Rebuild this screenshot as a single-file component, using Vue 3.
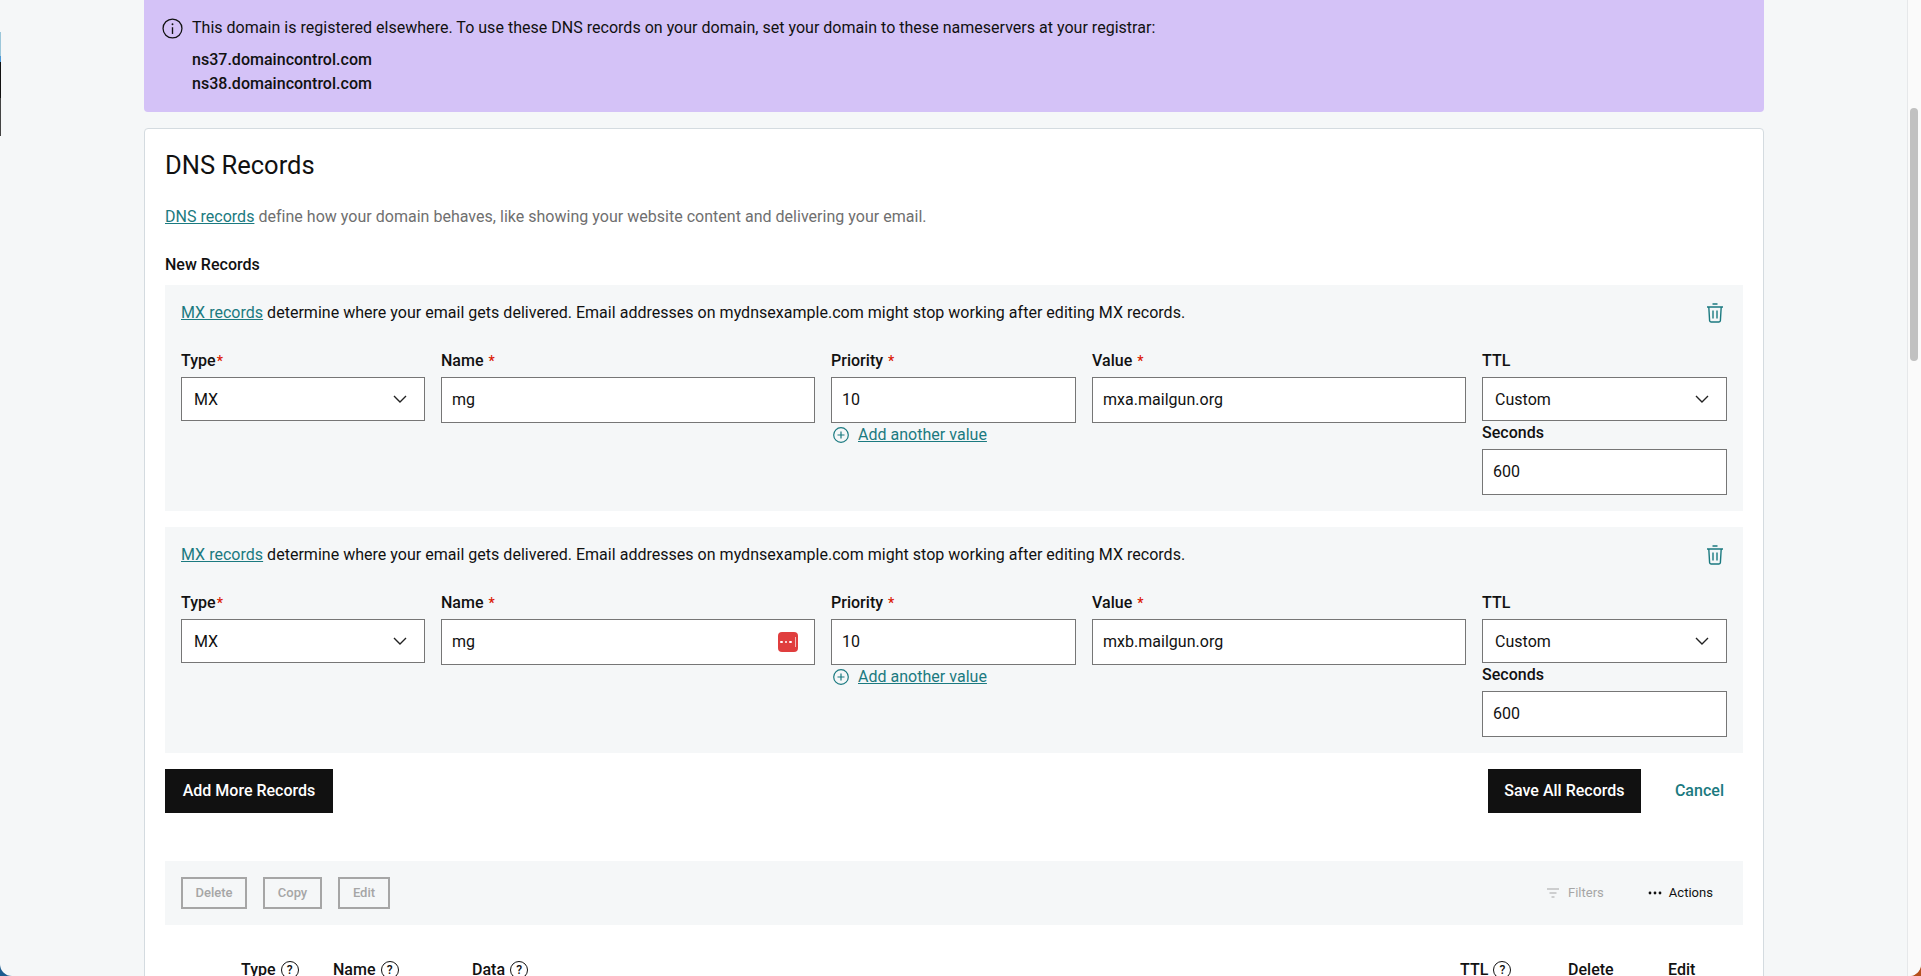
<template>
  <div class="desktop">
    <div class="window">
      <div class="main">
        <div class="notice">
          <svg class="info-icon" viewBox="0 0 20 20" width="21" height="21">
            <circle cx="10" cy="10" r="9" fill="none" stroke="#111" stroke-width="1.2" />
            <circle cx="10" cy="6" r="0.9" fill="#111" />
            <path d="M10 8.8v6.4" stroke="#111" stroke-width="1.3" />
          </svg>
          <div>
            <p class="notice-text">This domain is registered elsewhere. To use these DNS records on your domain, set your domain to these nameservers at your registrar:</p>
            <p class="ns">ns37.domaincontrol.com</p>
            <p class="ns">ns38.domaincontrol.com</p>
          </div>
        </div>

        <div class="card">
          <h2>DNS Records</h2>
          <p class="desc"><a href="#">DNS records</a> define how your domain behaves, like showing your website content and delivering your email.</p>
          <h3>New Records</h3>

          <div v-for="rec in records" :key="rec.value" class="panel">
            <div class="panel-top">
              <p><a href="#">MX records</a> determine where your email gets delivered. Email addresses on mydnsexample.com might stop working after editing MX records.</p>
              <svg class="trash" viewBox="0 0 18 20" width="18" height="20" fill="none" stroke="#1b7a80" stroke-width="1.4">
                <path d="M6.5 1h5M1 4h16M2.8 4l.8 13.6c0 .8.6 1.4 1.4 1.4h8c.8 0 1.4-.6 1.4-1.4L15.2 4M7 7.5v8M11 7.5v8" />
              </svg>
            </div>
            <div class="fields">
              <div>
                <label>Type<span class="req">*</span></label>
                <div class="select"><span>MX</span>
                  <svg viewBox="0 0 14 8" width="14" height="8"><path d="M1 1l6 6 6-6" fill="none" stroke="#222" stroke-width="1.4" /></svg>
                </div>
              </div>
              <div>
                <label>Name <span class="req">*</span></label>
                <div class="input">mg
                  <span v-if="rec.warn" class="pw-icon"><i></i><i></i><i></i><b></b></span>
                </div>
              </div>
              <div>
                <label>Priority <span class="req">*</span></label>
                <div class="input">10</div>
                <div class="add-value">
                  <svg viewBox="0 0 16 16" width="16" height="16" fill="none" stroke="#1b7a80" stroke-width="1.2">
                    <circle cx="8" cy="8" r="7.3" /><path d="M8 4.5v7M4.5 8h7" />
                  </svg>
                  <a href="#">Add another value</a>
                </div>
              </div>
              <div>
                <label>Value <span class="req">*</span></label>
                <div class="input">{{ rec.value }}</div>
              </div>
              <div>
                <label>TTL</label>
                <div class="select"><span>Custom</span>
                  <svg viewBox="0 0 14 8" width="14" height="8"><path d="M1 1l6 6 6-6" fill="none" stroke="#222" stroke-width="1.4" /></svg>
                </div>
                <label>Seconds</label>
                <div class="input">600</div>
              </div>
            </div>
          </div>

          <div class="actions">
            <button class="btn">Add More Records</button>
            <div class="actions-right">
              <button class="btn save">Save All Records</button>
              <a class="cancel" href="#">Cancel</a>
            </div>
          </div>

          <div class="toolbar">
            <div class="toolbar-left">
              <button class="ghost delete">Delete</button>
              <button class="ghost copy">Copy</button>
              <button class="ghost edit">Edit</button>
            </div>
            <div class="toolbar-right">
              <span class="filters">
                <svg viewBox="0 0 12 10" width="12" height="10" fill="none" stroke="#a6a6a6" stroke-width="1.1"><path d="M0 1h12M2.5 5h7M4.5 9h3" /></svg>
                Filters
              </span>
              <span class="more">
                <svg viewBox="0 0 14 4" width="14" height="4" fill="#111"><circle cx="2" cy="2" r="1.4" /><circle cx="7" cy="2" r="1.4" /><circle cx="12" cy="2" r="1.4" /></svg>
                Actions
              </span>
            </div>
          </div>

          <div class="table-head">
            <span></span>
            <span>Type <i class="help">?</i></span>
            <span>Name <i class="help">?</i></span>
            <span>Data <i class="help">?</i></span>
            <span>TTL <i class="help">?</i></span>
            <span>Delete</span>
            <span>Edit</span>
          </div>
        </div>
      </div>
      <div class="scrollbar"><div class="thumb"></div></div>
    </div>
    <div class="strip"></div>
  </div>
</template>

<script setup>
const records = [
  { value: 'mxa.mailgun.org', warn: false },
  { value: 'mxb.mailgun.org', warn: true }
]
</script>

<style>
body {
  margin: 0;
  overflow: hidden;
}
</style>

<style scoped>
.desktop {
  position: relative;
  width: 1921px;
  height: 976px;
  overflow: hidden;
  background: linear-gradient(to right, #1d5c8f 50%, #b5501c 50%);
  font-family: Roboto, "Liberation Sans", sans-serif;
  font-size: 16px;
  line-height: 24px;
  letter-spacing: 0.02px;
  color: #111;
}

.window {
  display: flex;
  height: 976px;
  background: #f5f7f8;
  border-radius: 0 0 12px 12px;
  overflow: hidden;
}

.main {
  flex: 1;
  padding-left: 144px;
}

p, h2, h3 {
  margin: 0;
}

a {
  color: #1b7a80;
}

.notice {
  display: flex;
  gap: 9px;
  width: 1620px;
  height: 112px;
  box-sizing: border-box;
  padding: 16px 18px;
  background: #d4c2f7;
  border-radius: 0 0 4px 4px;
}

.info-icon {
  flex: none;
  margin-top: 2px;
}

.notice-text {
  margin-bottom: 8px;
}

.ns {
  font-weight: 500;
}

.card {
  width: 1620px;
  box-sizing: border-box;
  margin-top: 16px;
  padding: 20px 20px 0;
  background: #fff;
  border: 1px solid #d4dbe0;
  border-radius: 4px;
}

h2 {
  font-size: 25.5px;
  line-height: 32px;
  font-weight: 400;
}

.desc {
  margin-top: 24px;
  color: #6f6f6f;
}

h3 {
  margin-top: 24px;
  font-size: 16px;
  font-weight: 500;
}

.panel {
  margin-top: 8px;
  padding: 16px;
  background: #f5f7f8;
}

.panel + .panel {
  margin-top: 16px;
}

.panel-top {
  display: flex;
  justify-content: space-between;
  align-items: center;
  padding-right: 3px;
}

.fields {
  display: grid;
  grid-template-columns: 244px 374px 245px 374px 245px;
  column-gap: 16px;
  margin-top: 24px;
  align-items: start;
}

label {
  display: block;
  margin-bottom: 4px;
  font-weight: 500;
}

.req {
  margin-left: 1px;
  font-size: 14px;
  color: #db1802;
}

.select, .input {
  display: flex;
  align-items: center;
  justify-content: space-between;
  box-sizing: border-box;
  background: #fff;
  border: 1px solid #767676;
}

.select {
  height: 44px;
  padding: 0 17px 0 12px;
}

.select span {
  padding-top: 1px;
}

.input {
  height: 46px;
  padding: 0 12px 0 10px;
}

.select svg {
  flex: none;
}

.pw-icon {
  position: relative;
  display: flex;
  align-items: center;
  justify-content: center;
  gap: 2px;
  width: 20px;
  height: 20px;
  margin-right: 4px;
  background: #e03e3e;
  border-radius: 4px;
}

.pw-icon i {
  width: 2.5px;
  height: 2.5px;
  background: #fff;
  border-radius: 50%;
}

.pw-icon b {
  width: 1px;
  height: 10px;
  margin-left: 1px;
  background: #f4bcbc;
}

.add-value {
  display: flex;
  align-items: center;
  gap: 9px;
  padding-left: 2px;
}

.actions {
  display: flex;
  justify-content: space-between;
  align-items: center;
  margin-top: 16px;
}

.actions-right {
  display: flex;
  align-items: center;
  gap: 34px;
  padding-right: 19px;
}

.btn {
  height: 44px;
  width: 168px;
  padding: 0 0 2px;
  border: none;
  background: #111;
  color: #fff;
  font: 500 16px Roboto, "Liberation Sans", sans-serif;
}

.btn.save {
  width: 153px;
}

.cancel {
  font-weight: 500;
  text-decoration: none;
}

.toolbar {
  display: flex;
  justify-content: space-between;
  align-items: center;
  height: 64px;
  margin-top: 48px;
  padding: 0 30px 0 16px;
  background: #f5f7f8;
}

.toolbar-left {
  display: flex;
  gap: 16px;
}

.ghost {
  height: 32px;
  padding: 0 0 1px;
  background: transparent;
  border: 2px solid #a6a6a6;
  color: #a6a6a6;
  font: 500 13px Roboto, "Liberation Sans", sans-serif;
}

.ghost.delete { width: 66px; }
.ghost.copy { width: 59px; }
.ghost.edit { width: 52px; }

.toolbar-right {
  display: flex;
  align-items: center;
  gap: 44px;
  font-size: 13px;
}

.filters {
  display: flex;
  align-items: center;
  gap: 9px;
  color: #a6a6a6;
}

.more {
  display: flex;
  align-items: center;
  gap: 7px;
}

.table-head {
  display: grid;
  grid-template-columns: 76px 92px 139px 988px 108px 100px auto;
  margin-top: 33px;
  font-weight: 500;
}

.help {
  display: inline-block;
  width: 16px;
  height: 16px;
  margin-left: 1px;
  border: 1.3px solid #111;
  border-radius: 50%;
  font-style: normal;
  font-size: 12px;
  line-height: 16px;
  text-align: center;
  vertical-align: 1px;
}

.scrollbar {
  position: relative;
  flex: none;
  width: 13px;
  background: #fafafa;
  border-left: 1px solid #e6e8ea;
}

.thumb {
  position: absolute;
  top: 108px;
  left: 2px;
  width: 8px;
  height: 253px;
  background: #c1c1c1;
  border-radius: 4px;
}

.strip {
  position: absolute;
  top: 32px;
  left: 0;
  width: 1px;
  height: 104px;
  background: linear-gradient(to bottom, #9cc7da 0 24px, #4a97d6 24px 30px, #111 30px 66px, #444 66px);
}
</style>
